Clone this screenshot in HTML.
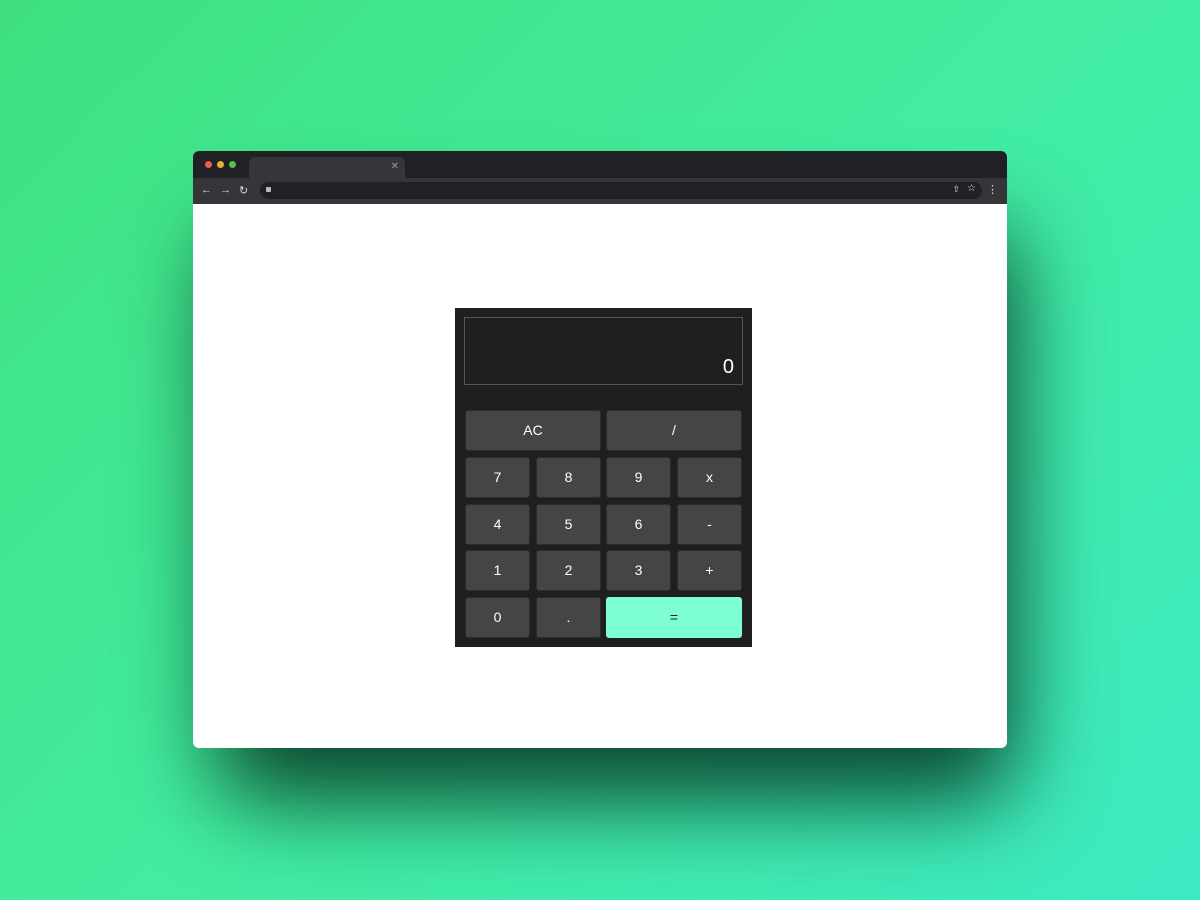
<!DOCTYPE html>
<html><head><style>
*{margin:0;padding:0;box-sizing:border-box}
body{width:1200px;height:900px;overflow:hidden;background:linear-gradient(135deg,#40e07f 0%,#42eda0 50%,#3de9c2 100%);font-family:"Liberation Sans",sans-serif;position:relative}
.shadow{position:absolute;left:215px;top:230px;width:800px;height:570px;background:rgba(0,40,25,.85);filter:blur(45px);border-radius:40px}
.win{position:absolute;left:193px;top:151px;width:814px;height:597px;border-radius:6px;overflow:hidden;background:#fff}
.title{height:27px;background:#202124;position:relative}
.dot{position:absolute;top:10px;width:7px;height:7px;border-radius:50%}
.tab{position:absolute;left:56px;top:6px;width:156px;height:21px;background:#35363a;border-radius:6px 6px 0 0}
.tab span{position:absolute;right:6px;top:4px;color:#999;font-size:10px}
.bar{height:26px;background:#35363a;position:relative;color:#ddd;font-size:11px}
.url{position:absolute;left:67px;top:4px;width:722px;height:17px;background:#202124;border-radius:9px}
.calc{position:absolute;left:262px;top:157px;width:297px;height:339px;background:#1f1f1f}
.disp{position:absolute;left:9px;top:9px;width:279px;height:68px;border:1px solid #555;color:#fff;font-size:20px;text-align:right;padding:38px 8px 0 0}
.b{position:absolute;background:#454545;border:1px solid #2c2c2c;border-radius:3px;color:#fff;font-size:14px;display:flex;align-items:center;justify-content:center;padding-bottom:2px}
</style></head><body>
<div class="shadow"></div>
<div class="win">
<div class="title">
<div class="dot" style="left:12px;background:#ee5b52"></div>
<div class="dot" style="left:24px;background:#e6b32e"></div>
<div class="dot" style="left:36px;background:#55c04a"></div>
<div class="tab"><span>✕</span></div>
</div>
<div class="bar">
<span style="position:absolute;left:8px;top:6px">←</span>
<span style="position:absolute;left:27px;top:6px">→</span>
<span style="position:absolute;left:46px;top:6px">↻</span>
<div class="url"><span style="position:absolute;left:6px;top:3px;width:5px;height:5px;background:#bbb;border-radius:1px;margin-top:2px"></span>
<span style="position:absolute;right:22px;top:2px;font-size:9px">⇧</span><span style="position:absolute;right:6px;top:1px;font-size:10px">☆</span></div>
<span style="position:absolute;right:9px;top:5px">⋮</span>
</div>
<div class="calc">
<div class="disp">0</div>
</div>
</div>
<div id="btns"></div>
<script>
var rows=[410,457,504,550,597],cols=[465,536,606,677],h=41,w=65;
var L=[[["AC",0,2],["/",2,2]],[["7",0,1],["8",1,1],["9",2,1],["x",3,1]],[["4",0,1],["5",1,1],["6",2,1],["-",3,1]],[["1",0,1],["2",1,1],["3",2,1],["+",3,1]],[["0",0,1],[".",1,1],["=",2,2]]];
var s="";L.forEach(function(r,i){r.forEach(function(b){var x=cols[b[1]],x2=cols[b[1]+b[2]-1]+w;s+='<div class="b" style="left:'+x+'px;top:'+rows[i]+'px;width:'+(x2-x)+'px;height:'+h+'px'+(b[0]=="="?';background:#7effd1;border-color:#7effd1;color:#222':'')+'">'+b[0]+'</div>'})});
document.getElementById("btns").innerHTML=s;
</script>
</body></html>
